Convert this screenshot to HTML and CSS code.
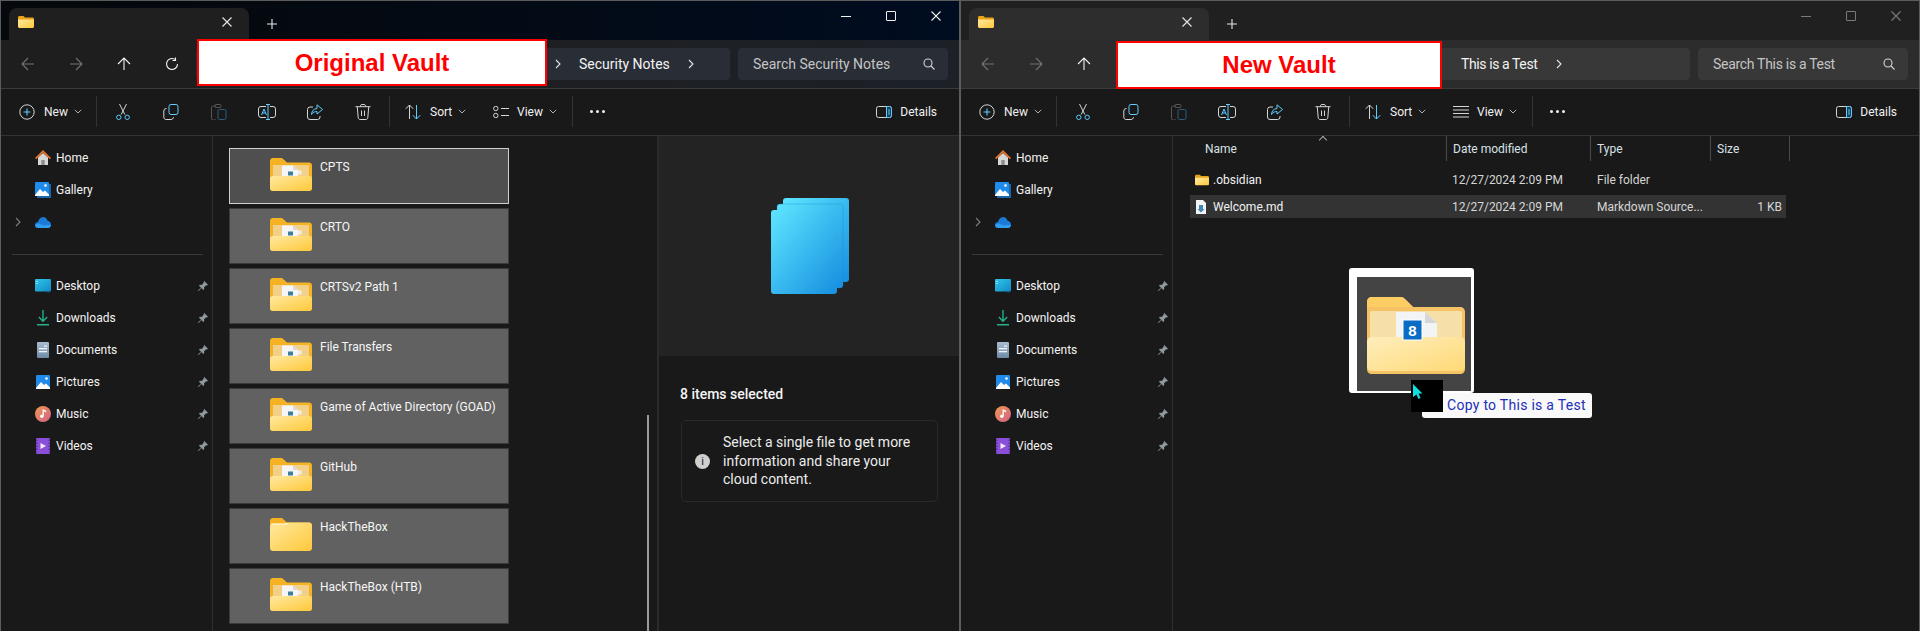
FILE: index.html
```html
<!DOCTYPE html>
<html lang="en">
<head>
    <meta charset="UTF-8">
    <meta name="viewport" content="width=device-width, initial-scale=1.0">
    <title>Copying folders between vaults</title>
    <link rel="stylesheet" href="styles.css">
</head>
<body>
    <!-- shared icons -->
    <svg class="defs" xmlns="http://www.w3.org/2000/svg">
        <defs>
            <linearGradient id="gFront" x1="0" y1="0" x2="1" y2="1"><stop offset="0" stop-color="#ffe9a0"/><stop offset="1" stop-color="#ffc83a"/></linearGradient>
            <linearGradient id="gPale" x1="0" y1="0" x2="1" y2="1"><stop offset="0" stop-color="#feeebd"/><stop offset="1" stop-color="#ffd976"/></linearGradient>
            <linearGradient id="gStack" x1="0" y1="0" x2="1" y2="1"><stop offset="0" stop-color="#5ee5ff"/><stop offset="1" stop-color="#1690e0"/></linearGradient>
            <linearGradient id="gMusic" x1="0" y1="0" x2="1" y2="1"><stop offset="0" stop-color="#ef9a4e"/><stop offset="1" stop-color="#d2608c"/></linearGradient>
            <linearGradient id="gDesk" x1="0" y1="0" x2="1" y2="1"><stop offset="0" stop-color="#2ec6e8"/><stop offset="1" stop-color="#1489c8"/></linearGradient>
            <linearGradient id="gDoc" x1="0" y1="0" x2="0" y2="1"><stop offset="0" stop-color="#a9bdd1"/><stop offset="1" stop-color="#6f8aa5"/></linearGradient>
        </defs>
        <symbol id="i-folder" viewBox="0 0 16 16">
            <path d="M0 3.5C0 2.700.7 2 1.500 2h4l1.500 1.500H14.500c.8 0 1.500.7 1.500 1.500v1H0z" fill="#e8a317"/>
            <path d="M0 5.500h16v7c0 .8-.7 1.500-1.500 1.500h-13C.7 14 0 13.300 0 12.500z" fill="url(#gFront)"/>
        </symbol>
        <symbol id="i-folder-full" viewBox="0 0 42 33">
            <path d="M0 3C0 1.300 1.300 0 3 0h9l5 4.500h22c1.700 0 3 1.300 3 3V30c0 1.700-1.300 3-3 3H3c-1.700 0-3-1.300-3-3z" fill="#f5b324"/>
            <rect x="3" y="7" width="36" height="15" fill="#f3d089"/>
            <path d="M12 7.500h11l5 4.500v7H12z" fill="#f6f6f6"/>
            <path d="M23 7.500l5 4.500h-5z" fill="#d9d9d9"/>
            <rect x="28" y="12.500" width="3.500" height="4" fill="#f0efe9"/>
            <rect x="18" y="13.500" width="5" height="4" fill="#3f7f9b"/>
            <path d="M0 21c0-2 1-3 3-3h36c2 0 3 1 3 3v9c0 1.700-1.300 3-3 3H3c-1.700 0-3-1.300-3-3z" fill="url(#gFront)"/>
        </symbol>
        <symbol id="i-folder-plain" viewBox="0 0 42 33">
            <path d="M0 3C0 1.300 1.300 0 3 0h9l5 4.500h22c1.700 0 3 1.300 3 3V12H0z" fill="#f5b324"/>
            <path d="M0 9c0-1.700 1.300-3.500 3-3.500h10.500L18 4.500h21c1.700 0 3 1.300 3 3V30c0 1.700-1.300 3-3 3H3c-1.700 0-3-1.300-3-3z" fill="url(#gFront)"/>
            <rect x="1" y="5.500" width="17" height="1" fill="#fff6d8"/>
        </symbol>
        <symbol id="i-home" viewBox="0 0 16 16">
            <path d="M3 7.500L8 3l5 4.500V15H3z" fill="#d7d7d7"/>
            <rect x="6.300" y="10" width="3.400" height="5" fill="#8d8d8d"/>
            <path d="M0 8L8 0l8 8-1.200 1.200L8 2.600 1.200 9.200z" fill="#e8742a"/>
        </symbol>
        <symbol id="i-gallery" viewBox="0 0 16 16">
            <rect x="2" y="2" width="14" height="14" rx="1" fill="#1c66ad"/>
            <rect x="0" y="0" width="14" height="14" rx="1" fill="#1f8ceb"/>
            <path d="M0 13l5-6 3 3 2-1.500 4 4V14H0z" fill="#fff"/>
            <circle cx="10.500" cy="3.500" r="1.300" fill="#fff"/>
        </symbol>
        <symbol id="i-cloud" viewBox="0 0 16 11">
            <path d="M3.500 11C1.500 11 0 9.700 0 8s1.300-3 3-3c.6-2.800 2.600-5 5-5 2.200 0 4 1.500 4.600 3.700C14.600 3.900 16 5.700 16 7.800 16 9.700 14.600 11 12.800 11z" fill="#1a7ad4"/>
            <path d="M3.500 11C1.500 11 0 9.700 0 8c2-1.500 4-2 6-.5s5 .5 10 .3c0 1.900-1.400 3.200-3.200 3.200z" fill="#2f9df0"/>
        </symbol>
        <symbol id="i-desktop" viewBox="0 0 16 14">
            <rect x="0" y="0" width="16" height="12.500" rx="1" fill="url(#gDesk)"/>
            <rect x="1.500" y="2" width="1" height="1" fill="#e8fbff"/>
            <rect x="1.500" y="4" width="1" height="1" fill="#e8fbff"/>
            <rect x="12" y="12.500" width="3" height="1" fill="#0e5f8c"/>
        </symbol>
        <symbol id="i-download" viewBox="0 0 16 16">
            <path d="M8 0v11M3.800 7L8 11.200 12.200 7" fill="none" stroke="#26b08c" stroke-width="1.400"/>
            <rect x="2" y="14" width="12" height="1.500" fill="#26b08c"/>
        </symbol>
        <symbol id="i-doc" viewBox="0 0 16 16">
            <rect x="2" y="0" width="12" height="16" rx="1" fill="url(#gDoc)"/>
            <rect x="4" y="6" width="8" height="1.300" fill="#eef3f8"/>
            <rect x="4" y="9" width="8" height="1.300" fill="#eef3f8"/>
            <rect x="9" y="3.500" width="3" height="1.300" fill="#eef3f8"/>
        </symbol>
        <symbol id="i-picture" viewBox="0 0 16 16">
            <rect x="1" y="1" width="14" height="14" rx="1" fill="#1f8ceb"/>
            <path d="M1 14l5-6 3 3 2-1.500 4 4V15H1z" fill="#fff"/>
            <circle cx="11.500" cy="4.500" r="1.300" fill="#fff"/>
        </symbol>
        <symbol id="i-music" viewBox="0 0 16 16">
            <circle cx="8" cy="8" r="8" fill="url(#gMusic)"/>
            <path d="M8.200 3.500v6.200" stroke="#fff" stroke-width="1.300"/>
            <path d="M8.500 3.500l2.700 1.200v1.500L8.500 5.200z" fill="#fff"/>
            <circle cx="6.800" cy="10.200" r="1.700" fill="#fff"/>
        </symbol>
        <symbol id="i-video" viewBox="0 0 16 16">
            <rect x="1" y="0" width="14" height="16" rx="1" fill="#8a4fd8"/>
            <path d="M1.800 1.500v13M14.200 1.500v13" stroke="#4a2a91" stroke-width="1.200" stroke-dasharray="1.500 1.500"/>
            <path d="M5.500 5l5.500 3-5.500 3z" fill="#f2eaff"/>
        </symbol>
        <symbol id="i-pin" viewBox="0 0 10 10">
            <path d="M6.200 0L10 3.800 9 4.500 8.200 4.200 6 6.500 6.200 8.200 5.300 9 3.300 7 .7 10 0 9.300 3 6.700 1 4.700 1.800 3.800 3.500 4 5.800 1.800 5.500 1z" fill="#8f979e"/>
        </symbol>
        <symbol id="i-new" viewBox="0 0 16 16">
            <circle cx="8" cy="8" r="7.200" fill="none" stroke="#d6d6d6"/>
            <path d="M8 4.500v7M4.500 8h7" stroke="#60cdff" stroke-width="1.100"/>
        </symbol>
        <symbol id="i-cut" viewBox="0 0 16 16">
            <path d="M4.500 0l5.300 10.500M11.500 0L6.200 10.500" stroke="#d6d6d6" fill="none"/>
            <circle cx="3.800" cy="13.300" r="2.200" fill="none" stroke="#60cdff"/>
            <circle cx="12.200" cy="13.300" r="2.200" fill="none" stroke="#60cdff"/>
        </symbol>
        <symbol id="i-copy" viewBox="0 0 16 16">
            <rect x="6" y=".5" width="9" height="10" rx="2" fill="none" stroke="#60cdff"/>
            <path d="M3.500 4.500H3A2.500 2.500 0 0 0 .8 7v6.200c0 1.300 1 2.300 2.300 2.300H8c1.300 0 2.300-1 2.500-2.300" fill="none" stroke="#d6d6d6"/>
        </symbol>
        <symbol id="i-paste" viewBox="0 0 16 16">
            <path d="M5 2H2A1.500 1.500 0 0 0 .5 3.500v11A1.500 1.500 0 0 0 2 16h3" fill="none" stroke="#555"/>
            <rect x="4" y=".5" width="6" height="3" rx="1" fill="none" stroke="#555"/>
            <rect x="7" y="5.500" width="8" height="10" rx="1.500" fill="none" stroke="#2a5f7d"/>
        </symbol>
        <symbol id="i-rename" viewBox="0 0 18 16">
            <path d="M8 2.500H3A2.500 2.500 0 0 0 .5 5v6A2.500 2.500 0 0 0 3 13.500h5M12 2.500h3A2.500 2.500 0 0 1 17.500 5v6a2.500 2.500 0 0 1-2.500 2.500h-3" fill="none" stroke="#d6d6d6"/>
            <path d="M10 .5v15M8 .5h4M8 15.500h4" stroke="#60cdff" fill="none"/>
            <path d="M3.500 11l2.500-6 2.500 6M4.500 9h3" stroke="#60cdff" fill="none"/>
        </symbol>
        <symbol id="i-share" viewBox="0 0 16 16">
            <path d="M6 3H3A2.500 2.500 0 0 0 .5 5.500V13A2.500 2.500 0 0 0 3 15.500h7.500A2.500 2.500 0 0 0 13 13v-1" fill="none" stroke="#d6d6d6"/>
            <path d="M10 .8l5.500 4.700L10 10V7.500c-2.500 0-4 .8-5.500 3 .3-3.500 2-5.800 5.500-6z" fill="none" stroke="#60cdff" stroke-linejoin="round"/>
        </symbol>
        <symbol id="i-trash" viewBox="0 0 16 16">
            <path d="M.5 2.700h15M5.500 2.500V1.800C5.500 1 6 .5 6.800.5h2.400c.8 0 1.300.5 1.300 1.300v.7M2.300 3l.9 10.700c.1 1 .8 1.800 1.900 1.800h5.800c1.100 0 1.800-.8 1.900-1.800L13.700 3M6.500 6.500v5.500M9.500 6.500v5.500" fill="none" stroke="#d6d6d6"/>
        </symbol>
        <symbol id="i-sort" viewBox="0 0 16 16">
            <path d="M4.500 15V1M.8 4.800L4.500 1l3.700 3.800" fill="none" stroke="#d6d6d6"/>
            <path d="M11.500 1v14M7.800 11.200L11.500 15l3.700-3.800" fill="none" stroke="#60cdff"/>
        </symbol>
        <symbol id="i-tiles" viewBox="0 0 16 12">
            <circle cx="2.800" cy="2.500" r="2.200" fill="none" stroke="#d6d6d6"/>
            <circle cx="2.800" cy="9.500" r="2.200" fill="none" stroke="#d6d6d6"/>
            <path d="M8 2.500h8M8 9.500h8" stroke="#d6d6d6"/>
        </symbol>
        <symbol id="i-lines" viewBox="0 0 16 12">
            <path d="M0 .5h16M0 4h16M0 7.500h16M0 11h16" stroke="#d6d6d6"/>
        </symbol>
        <symbol id="i-pane" viewBox="0 0 16 12">
            <rect x=".5" y=".5" width="15" height="11" rx="2" fill="none" stroke="#d6d6d6"/>
            <path d="M10.500 .5h3a2 2 0 0 1 2 2v7a2 2 0 0 1-2 2h-3z" fill="#1c3b50" stroke="#60cdff"/>
            <path d="M12 4h2M12 6h2M12 8h2" stroke="#60cdff"/>
        </symbol>
        <symbol id="i-search" viewBox="0 0 12 12">
            <circle cx="5" cy="5" r="4" fill="none" stroke="#d6d6d6" stroke-width="1.100"/>
            <path d="M8 8l3.500 3.500" stroke="#d6d6d6" stroke-width="1.100"/>
        </symbol>
        <symbol id="i-back" viewBox="0 0 14 14">
            <path d="M13 7H1M7 1L1 7l6 6" fill="none" stroke="currentColor" stroke-width="1.100"/>
        </symbol>
        <symbol id="i-forward" viewBox="0 0 14 14">
            <path d="M1 7h12M7 1l6 6-6 6" fill="none" stroke="currentColor" stroke-width="1.100"/>
        </symbol>
        <symbol id="i-up" viewBox="0 0 14 14">
            <path d="M7 13V1M1 7l6-6 6 6" fill="none" stroke="currentColor" stroke-width="1.100"/>
        </symbol>
        <symbol id="i-refresh" viewBox="0 0 14 14">
            <path d="M12.500 7A5.500 5.500 0 1 1 10 2.400M10.500 .5v3h-3" fill="none" stroke="currentColor" stroke-width="1.100"/>
        </symbol>
        <symbol id="i-chev" viewBox="0 0 6 10">
            <path d="M1 1l4 4-4 4" fill="none" stroke="currentColor" stroke-width="1.100"/>
        </symbol>
        <symbol id="i-down" viewBox="0 0 8 5">
            <path d="M.8.8L4 4l3.200-3.200" fill="none" stroke="#b0b0b0"/>
        </symbol>
        <symbol id="i-close" viewBox="0 0 10 10">
            <path d="M.5.500l9 9M9.500.500l-9 9" stroke="currentColor" stroke-width="1.100"/>
        </symbol>
        <symbol id="i-plus" viewBox="0 0 10 10">
            <path d="M5 0v10M0 5h10" stroke="currentColor" stroke-width="1.100"/>
        </symbol>
    </svg>

    <div class="desktop">

        <!-- original vault -->
        <section class="window window-active">
            <div class="titlebar">
                <div class="tab">
                    <svg class="ic16"><use href="#i-folder"/></svg>
                    <svg class="tab-close"><use href="#i-close"/></svg>
                </div>
                <svg class="tab-plus"><use href="#i-plus"/></svg>
                <div class="win-btns">
                    <span class="win-btn"><span class="win-min"></span></span>
                    <span class="win-btn"><span class="win-max"></span></span>
                    <span class="win-btn"><svg class="win-x"><use href="#i-close"/></svg></span>
                </div>
            </div>
            <div class="navbar">
                <span class="nav-btn dim"><svg class="ic14"><use href="#i-back"/></svg></span>
                <span class="nav-btn dim"><svg class="ic14"><use href="#i-forward"/></svg></span>
                <span class="nav-btn"><svg class="ic14"><use href="#i-up"/></svg></span>
                <span class="nav-btn"><svg class="ic14"><use href="#i-refresh"/></svg></span>
                <div class="address address-orig">
                    <svg class="chev"><use href="#i-chev"/></svg>
                    <span>Security Notes</span>
                    <svg class="chev"><use href="#i-chev"/></svg>
                </div>
                <div class="search">
                    <span>Search Security Notes</span>
                    <svg class="search-ic"><use href="#i-search"/></svg>
                </div>
            </div>
            <div class="toolbar">
                <span class="tool tool-new"><svg class="ic16"><use href="#i-new"/></svg>New<svg class="down"><use href="#i-down"/></svg></span>
                <span class="tool-sep"></span>
                <div class="tool-icons">
                    <span class="tool-icon"><svg class="ic16"><use href="#i-cut"/></svg></span>
                    <span class="tool-icon"><svg class="ic16"><use href="#i-copy"/></svg></span>
                    <span class="tool-icon"><svg class="ic16"><use href="#i-paste"/></svg></span>
                    <span class="tool-icon"><svg class="ic-rename"><use href="#i-rename"/></svg></span>
                    <span class="tool-icon"><svg class="ic16"><use href="#i-share"/></svg></span>
                    <span class="tool-icon"><svg class="ic16"><use href="#i-trash"/></svg></span>
                </div>
                <span class="tool-sep"></span>
                <span class="tool tool-sort"><svg class="ic16"><use href="#i-sort"/></svg>Sort<svg class="down"><use href="#i-down"/></svg></span>
                <span class="tool tool-view"><svg class="ic-wide"><use href="#i-tiles"/></svg>View<svg class="down"><use href="#i-down"/></svg></span>
                <span class="tool-sep"></span>
                <span class="tool-more"><i></i><i></i><i></i></span>
                <span class="tool tool-details"><svg class="ic-wide"><use href="#i-pane"/></svg>Details</span>
            </div>
            <div class="body">
                <nav class="sidebar">
                    <a class="side-item"><span class="exp"></span><svg class="ic16"><use href="#i-home"/></svg>Home</a>
                    <a class="side-item"><span class="exp"></span><svg class="ic16"><use href="#i-gallery"/></svg>Gallery</a>
                    <a class="side-item"><span class="exp"><svg class="exp-chev"><use href="#i-chev"/></svg></span><svg class="ic-cloud"><use href="#i-cloud"/></svg></a>
                    <div class="side-sep"></div>
                    <a class="side-item"><span class="exp"></span><svg class="ic16"><use href="#i-desktop"/></svg>Desktop<svg class="pin"><use href="#i-pin"/></svg></a>
                    <a class="side-item"><span class="exp"></span><svg class="ic16"><use href="#i-download"/></svg>Downloads<svg class="pin"><use href="#i-pin"/></svg></a>
                    <a class="side-item"><span class="exp"></span><svg class="ic16"><use href="#i-doc"/></svg>Documents<svg class="pin"><use href="#i-pin"/></svg></a>
                    <a class="side-item"><span class="exp"></span><svg class="ic16"><use href="#i-picture"/></svg>Pictures<svg class="pin"><use href="#i-pin"/></svg></a>
                    <a class="side-item"><span class="exp"></span><svg class="ic16"><use href="#i-music"/></svg>Music<svg class="pin"><use href="#i-pin"/></svg></a>
                    <a class="side-item"><span class="exp"></span><svg class="ic16"><use href="#i-video"/></svg>Videos<svg class="pin"><use href="#i-pin"/></svg></a>
                </nav>
                <div class="tiles">
                    <div class="tile tile-focus"><svg class="tile-ic"><use href="#i-folder-full"/></svg>CPTS</div>
                    <div class="tile"><svg class="tile-ic"><use href="#i-folder-full"/></svg>CRTO</div>
                    <div class="tile"><svg class="tile-ic"><use href="#i-folder-full"/></svg>CRTSv2 Path 1</div>
                    <div class="tile"><svg class="tile-ic"><use href="#i-folder-full"/></svg>File Transfers</div>
                    <div class="tile"><svg class="tile-ic"><use href="#i-folder-full"/></svg>Game of Active Directory (GOAD)</div>
                    <div class="tile"><svg class="tile-ic"><use href="#i-folder-full"/></svg>GitHub</div>
                    <div class="tile"><svg class="tile-ic"><use href="#i-folder-plain"/></svg>HackTheBox</div>
                    <div class="tile"><svg class="tile-ic"><use href="#i-folder-full"/></svg>HackTheBox (HTB)</div>
                    <div class="scrollbar"></div>
                </div>
                <aside class="details">
                    <div class="preview">
                        <svg class="stack" viewBox="0 0 78 96">
                            <rect x="12" y="0" width="66" height="84" rx="3" fill="url(#gStack)"/>
                            <rect x="6" y="6" width="66" height="84" rx="3" fill="url(#gStack)" stroke="#1b86cf" stroke-opacity=".35"/>
                            <rect x="0" y="12" width="66" height="84" rx="3" fill="url(#gStack)"/>
                        </svg>
                    </div>
                    <h3 class="sel-count">8 items selected</h3>
                    <div class="info">
                        <span class="info-dot">i</span>
                        <p>Select a single file to get more information and share your cloud content.</p>
                    </div>
                </aside>
            </div>
            <div class="vault-label vault-orig">Original Vault</div>
        </section>

        <!-- new vault -->
        <section class="window window-idle">
            <div class="titlebar">
                <div class="tab">
                    <svg class="ic16"><use href="#i-folder"/></svg>
                    <svg class="tab-close"><use href="#i-close"/></svg>
                </div>
                <svg class="tab-plus"><use href="#i-plus"/></svg>
                <div class="win-btns">
                    <span class="win-btn"><span class="win-min"></span></span>
                    <span class="win-btn"><span class="win-max"></span></span>
                    <span class="win-btn"><svg class="win-x"><use href="#i-close"/></svg></span>
                </div>
            </div>
            <div class="navbar">
                <span class="nav-btn dim"><svg class="ic14"><use href="#i-back"/></svg></span>
                <span class="nav-btn dim"><svg class="ic14"><use href="#i-forward"/></svg></span>
                <span class="nav-btn"><svg class="ic14"><use href="#i-up"/></svg></span>
                <span class="nav-btn"><svg class="ic14"><use href="#i-refresh"/></svg></span>
                <div class="address address-new">
                    <svg class="chev"><use href="#i-chev"/></svg>
                    <span>This is a Test</span>
                    <svg class="chev"><use href="#i-chev"/></svg>
                </div>
                <div class="search">
                    <span>Search This is a Test</span>
                    <svg class="search-ic"><use href="#i-search"/></svg>
                </div>
            </div>
            <div class="toolbar">
                <span class="tool tool-new"><svg class="ic16"><use href="#i-new"/></svg>New<svg class="down"><use href="#i-down"/></svg></span>
                <span class="tool-sep"></span>
                <div class="tool-icons">
                    <span class="tool-icon"><svg class="ic16"><use href="#i-cut"/></svg></span>
                    <span class="tool-icon"><svg class="ic16"><use href="#i-copy"/></svg></span>
                    <span class="tool-icon"><svg class="ic16"><use href="#i-paste"/></svg></span>
                    <span class="tool-icon"><svg class="ic-rename"><use href="#i-rename"/></svg></span>
                    <span class="tool-icon"><svg class="ic16"><use href="#i-share"/></svg></span>
                    <span class="tool-icon"><svg class="ic16"><use href="#i-trash"/></svg></span>
                </div>
                <span class="tool-sep"></span>
                <span class="tool tool-sort"><svg class="ic16"><use href="#i-sort"/></svg>Sort<svg class="down"><use href="#i-down"/></svg></span>
                <span class="tool tool-view"><svg class="ic-wide"><use href="#i-lines"/></svg>View<svg class="down"><use href="#i-down"/></svg></span>
                <span class="tool-sep"></span>
                <span class="tool-more"><i></i><i></i><i></i></span>
                <span class="tool tool-details"><svg class="ic-wide"><use href="#i-pane"/></svg>Details</span>
            </div>
            <div class="body">
                <nav class="sidebar">
                    <a class="side-item"><span class="exp"></span><svg class="ic16"><use href="#i-home"/></svg>Home</a>
                    <a class="side-item"><span class="exp"></span><svg class="ic16"><use href="#i-gallery"/></svg>Gallery</a>
                    <a class="side-item"><span class="exp"><svg class="exp-chev"><use href="#i-chev"/></svg></span><svg class="ic-cloud"><use href="#i-cloud"/></svg></a>
                    <div class="side-sep"></div>
                    <a class="side-item"><span class="exp"></span><svg class="ic16"><use href="#i-desktop"/></svg>Desktop<svg class="pin"><use href="#i-pin"/></svg></a>
                    <a class="side-item"><span class="exp"></span><svg class="ic16"><use href="#i-download"/></svg>Downloads<svg class="pin"><use href="#i-pin"/></svg></a>
                    <a class="side-item"><span class="exp"></span><svg class="ic16"><use href="#i-doc"/></svg>Documents<svg class="pin"><use href="#i-pin"/></svg></a>
                    <a class="side-item"><span class="exp"></span><svg class="ic16"><use href="#i-picture"/></svg>Pictures<svg class="pin"><use href="#i-pin"/></svg></a>
                    <a class="side-item"><span class="exp"></span><svg class="ic16"><use href="#i-music"/></svg>Music<svg class="pin"><use href="#i-pin"/></svg></a>
                    <a class="side-item"><span class="exp"></span><svg class="ic16"><use href="#i-video"/></svg>Videos<svg class="pin"><use href="#i-pin"/></svg></a>
                </nav>
                <div class="files">
                    <div class="file-head">
                        <span class="sort-caret"></span>
                        <span class="col col-name">Name</span>
                        <span class="col">Date modified</span>
                        <span class="col">Type</span>
                        <span class="col">Size</span>
                    </div>
                    <div class="file-row">
                        <span class="file-name"><svg class="ic-file"><use href="#i-folder"/></svg>.obsidian</span>
                        <span>12/27/2024 2:09 PM</span>
                        <span>File folder</span>
                        <span></span>
                    </div>
                    <div class="file-row file-row-sel">
                        <span class="file-name"><svg class="ic-file" viewBox="0 0 16 14"><path d="M2 0h7l3 3v11H2z" fill="#f4f4f4"/><path d="M5 5h4v4h1.500L7 12.500 3.500 9H5z" fill="#3f87b5"/></svg>Welcome.md</span>
                        <span>12/27/2024 2:09 PM</span>
                        <span>Markdown Source...</span>
                        <span class="file-size">1 KB</span>
                    </div>
                </div>
            </div>
            <div class="vault-label vault-new">New Vault</div>

            <!-- drag ghost -->
            <div class="ghost">
                <svg class="ghost-folder" viewBox="0 0 98 77">
                    <path d="M0 5C0 2 2 0 5 0h28c3 0 4 1 6 3l7 7h47c3 0 5 2 5 5v57c0 3-2 5-5 5H5c-3 0-5-2-5-5z" fill="#f6c266"/>
                    <path d="M0 5C0 2 2 0 5 0h28c3 0 4 1 6 3l7 7H0z" fill="#fccd62"/>
                    <rect x="3" y="14" width="92" height="34" rx="2" fill="#f7dfa8"/>
                    <path d="M29 15h29l12 11v21H29z" fill="#f3f4f6"/>
                    <path d="M58 15l12 11H58z" fill="#d5d6d8"/>
                    <path d="M0 45c0-3 2-5 5-5h88c3 0 5 2 5 5v24c0 3-2 5-5 5H5c-3 0-5-2-5-5z" fill="url(#gPale)"/>
                    <path d="M36 23h19v20H36z" fill="#0a6cc4" stroke="#fff"/>
                    <text x="45.500" y="38.500" class="ghost-count">8</text>
                </svg>
            </div>
            <div class="drag-cursor">
                <svg class="cursor-ic" viewBox="0 0 10 15"><path d="M0 0l9.500 9.500H5.500L7.500 14 5.500 15 3.500 10.500 0 13z" fill="#12e0e0"/></svg>
            </div>
            <div class="drag-tip">Copy to This is a Test</div>
        </section>
    </div>
</body>
</html>
```

FILE: styles.css
```css
* {
    box-sizing: border-box;
}

body {
    margin: 0;
    background-color: #191919;
    color: #FFFFFF;
    font-family: Roboto, "Open Sans", sans-serif;
    font-size: 12px;
    overflow: hidden;
}

svg {
    display: block;
    flex: none;
}

.defs {
    width: 0;
    height: 0;
}

.desktop {
    display: flex;
    width: 1920px;
    height: 631px;
}

.window {
    position: relative;
    width: 960px;
    height: 631px;
    display: flex;
    flex-direction: column;
    border: 1px solid #5c5c5c;
    border-bottom: none;
    background-color: #191919;
    overflow: hidden;
}

/* title bar */
.titlebar {
    height: 39px;
    flex: none;
    display: flex;
    align-items: flex-end;
    padding: 0 1px 0 8px;
}

.window-active .titlebar {
    background: linear-gradient(90deg, #05080c 0%, #040a12 40%, #000c20 100%);
}

.window-idle .titlebar {
    background-color: #202020;
}

.tab {
    width: 240px;
    height: 32px;
    border-radius: 8px 8px 0 0;
    display: flex;
    align-items: center;
    justify-content: space-between;
    padding: 0 17px 4px 9px;
}

.window-active .tab {
    background-color: #1f1f1f;
}

.window-idle .tab {
    background-color: #2d2d2d;
}

.tab-close {
    width: 10px;
    height: 10px;
    color: #e8e8e8;
}

.tab-plus {
    width: 10px;
    height: 10px;
    margin: 0 0 11px 18px;
    color: #e8e8e8;
}

.win-btns {
    display: flex;
    margin-left: auto;
    align-self: flex-start;
}

.win-btn {
    width: 45px;
    height: 30px;
    display: flex;
    align-items: center;
    justify-content: center;
}

.win-min {
    width: 10px;
    height: 1px;
    background-color: #f0f0f0;
}

.win-max {
    width: 10px;
    height: 10px;
    border: 1px solid #f0f0f0;
    border-radius: 1px;
}

.win-x {
    width: 10px;
    height: 10px;
    color: #f0f0f0;
}

.window-idle .win-min {
    background-color: #7b7b7b;
}

.window-idle .win-max {
    border-color: #7b7b7b;
}

.window-idle .win-x {
    color: #7b7b7b;
}

/* address row */
.navbar {
    height: 49px;
    flex: none;
    display: flex;
    align-items: center;
    padding: 0 11px 1px 3px;
    border-bottom: 1px solid #3b3b3b;
}

.window-active .navbar {
    background: linear-gradient(90deg, #1e1e1e 0%, #1e1e1f 40%, #1c2128 100%);
}

.window-idle .navbar {
    background-color: #2c2c2c;
}

.nav-btn {
    width: 48px;
    display: flex;
    justify-content: center;
    color: #f2f2f2;
}

.nav-btn.dim {
    color: #737373;
}

.ic14 {
    width: 14px;
    height: 14px;
}

.address {
    flex: 1;
    height: 32px;
    margin-right: 8px;
    display: flex;
    align-items: center;
    border-radius: 4px;
    font-size: 14px;
    color: #f2f2f2;
}

.address-orig {
    padding-left: 359px;
    gap: 18px;
}

.address-new {
    padding-left: 280px;
    gap: 19px;
    letter-spacing: -0.4px;
}

.window-active .address,
.window-active .search {
    background-color: #292e36;
}

.window-idle .address,
.window-idle .search {
    background-color: #383838;
}

.window-idle .search {
    letter-spacing: -0.3px;
}

.chev {
    width: 6px;
    height: 10px;
    color: #e4e4e4;
}

.search {
    width: 210px;
    height: 32px;
    flex: none;
    display: flex;
    align-items: center;
    justify-content: space-between;
    padding: 0 13px 0 15px;
    border-radius: 4px;
    font-size: 14px;
    color: #c4c4c4;
}

.search-ic {
    width: 12px;
    height: 12px;
}

/* command bar */
.toolbar {
    height: 47px;
    flex: none;
    display: flex;
    align-items: center;
    padding: 0 22px 1px 18px;
    border-bottom: 1px solid #333333;
    background-color: #191919;
    color: #f0f0f0;
}

.tool {
    display: flex;
    align-items: center;
    flex: none;
}

.tool .down {
    width: 8px;
    height: 5px;
    margin-left: 6px;
}

.ic16 {
    width: 16px;
    height: 16px;
}

.ic-wide {
    width: 16px;
    height: 12px;
}

.ic-rename {
    width: 18px;
    height: 16px;
}

.tool-new {
    width: 77px;
    gap: 9px;
}

.tool-new .down {
    margin-left: -3px;
}

.tool-sep {
    width: 1px;
    height: 31px;
    flex: none;
    background-color: #333333;
}

.tool-icons {
    display: flex;
    padding: 0 2px;
}

.tool-icon {
    width: 48px;
    display: flex;
    justify-content: center;
}

.tool-sort {
    width: 88px;
    margin-left: 15px;
    gap: 9px;
}

.tool-sort .down {
    margin-left: -3px;
}

.tool-view {
    width: 79px;
    gap: 8px;
}

.tool-view .down {
    margin-left: -2px;
}

.tool-more {
    width: 48px;
    display: flex;
    justify-content: center;
    gap: 3px;
}

.tool-more i {
    width: 3px;
    height: 3px;
    border-radius: 50%;
    background-color: #f0f0f0;
}

.tool-details {
    margin-left: auto;
    gap: 8px;
}

/* main area */
.body {
    flex: 1;
    display: flex;
    min-height: 0;
}

.sidebar {
    width: 212px;
    flex: none;
    padding: 6px 4px 0 13px;
    border-right: 1px solid #2f2f2f;
}

.side-item {
    height: 32px;
    display: flex;
    align-items: center;
    gap: 5px;
    color: #f4f4f4;
}

.exp {
    width: 16px;
    flex: none;
}

.exp-chev {
    width: 6px;
    height: 10px;
    margin-left: 1px;
    color: #7d7d7d;
}

.ic-cloud {
    width: 16px;
    height: 11px;
}

.pin {
    width: 10px;
    height: 10px;
    margin-left: auto;
}

.side-sep {
    height: 1px;
    margin: 16px 5px 15px -2px;
    background-color: #3a3a3a;
}

/* tile view on the left */
.tiles {
    position: relative;
    flex: 1;
    display: flex;
    flex-direction: column;
    gap: 4px;
    padding: 12px 0 0 16px;
}

.tile {
    width: 280px;
    height: 56px;
    flex: none;
    display: flex;
    align-items: flex-start;
    gap: 8px;
    padding: 9px 0 0 40px;
    border: 1px solid #3a3a3a;
    background-color: #616161;
    line-height: 18px;
    color: #f6f6f6;
}

.tile-focus {
    border-color: #cfcfcf;
    background-color: #4f4f4f;
}

.tile-ic {
    width: 42px;
    height: 33px;
}

.scrollbar {
    position: absolute;
    right: 8px;
    top: 279px;
    bottom: 0;
    width: 2px;
    background-color: #9a9a9a;
}

.details {
    width: 302px;
    flex: none;
    border-left: 2px solid #2b2b2b;
}

.preview {
    height: 220px;
    display: flex;
    align-items: center;
    justify-content: center;
    padding-left: 2px;
    background-color: #232323;
}

.stack {
    width: 78px;
    height: 96px;
}

.sel-count {
    margin: 29px 0 0 21px;
    font-size: 14px;
    line-height: 19px;
    font-weight: 500;
    color: #f4f4f4;
}

.info {
    width: 257px;
    height: 82px;
    margin: 16px 0 0 22px;
    display: flex;
    align-items: center;
    gap: 13px;
    padding-left: 13px;
    border: 1px solid #2a2a2a;
    border-radius: 5px;
}

.info-dot {
    width: 15px;
    height: 15px;
    flex: none;
    border-radius: 50%;
    background-color: #cfcfcf;
    color: #191919;
    font-size: 11px;
    line-height: 15px;
    text-align: center;
}

.info p {
    width: 196px;
    margin: 0;
    font-size: 14px;
    line-height: 18.500px;
    color: #ececec;
}

/* details list on the right */
.files {
    position: relative;
    flex: 1;
}

.file-head {
    display: grid;
    grid-template-columns: 274px 144px 120px 79px;
    height: 25px;
    color: #d8e2e8;
}

.col {
    display: flex;
    align-items: center;
    padding-left: 6px;
    border-right: 1px solid #4a4a4a;
}

.col-name {
    padding-left: 32px;
}

.sort-caret {
    position: absolute;
    left: 147px;
    top: 1px;
    width: 6px;
    height: 6px;
    border-top: 1px solid #a8a8a8;
    border-left: 1px solid #a8a8a8;
    transform: rotate(45deg);
}

.file-row {
    display: grid;
    grid-template-columns: 256px 145px 120px 75px;
    align-items: center;
    height: 23px;
    margin: 4px 0 0 17px;
    width: 596px;
    color: #d6d6d6;
}

.file-head + .file-row {
    margin-top: 7px;
}

.file-row span {
    padding-left: 6px;
    white-space: nowrap;
}

.file-name {
    display: flex;
    align-items: center;
    gap: 3px;
    color: #f2f2f2;
}

.file-row .file-name {
    padding-left: 4px;
}

.ic-file {
    width: 16px;
    height: 14px;
}

.file-row-sel {
    padding-top: 1px;
    background-color: #333333;
}

.file-size {
    text-align: right;
    padding-right: 4px;
}

/* things laid over the windows */
.vault-label {
    position: absolute;
    display: flex;
    align-items: center;
    justify-content: center;
    border: 2px solid #ff0000;
    background-color: #FFFFFF;
    color: #ff0000;
    font-family: "Liberation Sans", Arial, sans-serif;
    font-size: 24px;
    font-weight: bold;
}

.vault-orig {
    left: 196px;
    top: 38px;
    width: 350px;
    height: 47px;
}

.vault-new {
    left: 155px;
    top: 40px;
    width: 326px;
    height: 48px;
}

.ghost {
    position: absolute;
    left: 388px;
    top: 267px;
    width: 125px;
    height: 125px;
    padding: 20px 0 0 10px;
    background-color: #444444;
    border-style: solid;
    border-color: #FFFFFF;
    border-width: 9px 3px 2px 8px;
    border-radius: 3px;
}

.ghost-folder {
    width: 98px;
    height: 77px;
}

.ghost-count {
    fill: #FFFFFF;
    font-family: "Liberation Sans", Arial, sans-serif;
    font-size: 15px;
    font-weight: bold;
    text-anchor: middle;
}

.drag-cursor {
    position: absolute;
    left: 450px;
    top: 379px;
    width: 32px;
    height: 32px;
    padding: 4px 0 0 2px;
    background-color: #000000;
    z-index: 2;
}

.cursor-ic {
    width: 10px;
    height: 15px;
}

.drag-tip {
    position: absolute;
    left: 461px;
    top: 392px;
    width: 170px;
    height: 25px;
    padding-left: 25px;
    border-radius: 3px;
    background-color: #f9f9f9;
    color: #1e2fb8;
    font-size: 14px;
    letter-spacing: 0.28px;
    line-height: 24px;
    white-space: nowrap;
}
```
